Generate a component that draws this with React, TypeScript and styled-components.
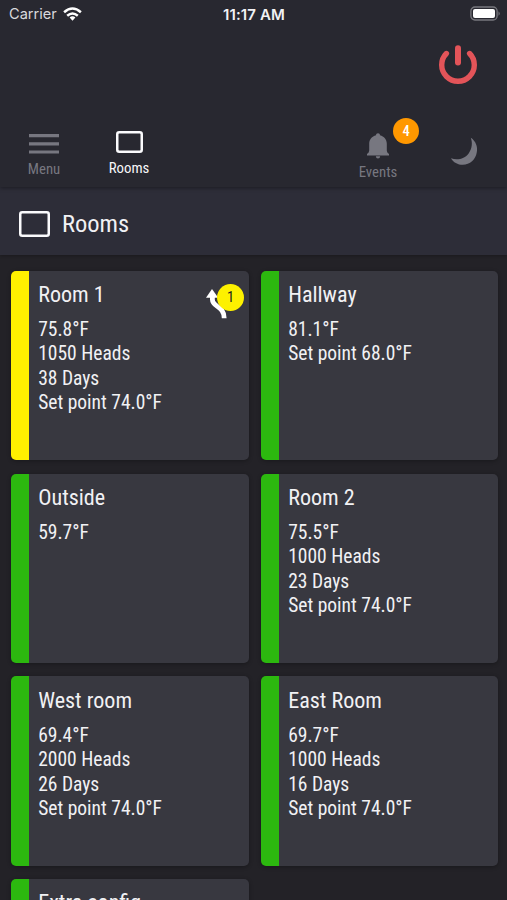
import React from "react";
import styled, { createGlobalStyle } from "styled-components";

const GlobalStyle = createGlobalStyle`
  * { box-sizing: border-box; }
  body {
    margin: 0;
    background: #232227;
    font-family: "Roboto Condensed", Roboto, sans-serif;
    font-stretch: 75%;
    overflow: hidden;
  }
`;

const Screen = styled.div`
  width: 507px;
  height: 900px;
  overflow: hidden;
  display: flex;
  flex-direction: column;
  color: #f1f1f4;
  background: #232227;
`;

const Header = styled.header`
  height: 187px;
  flex: none;
  display: flex;
  flex-direction: column;
  background: #282830;
  box-shadow: 0 1px 4px rgba(0, 0, 0, 0.4);
  z-index: 1;
`;

const StatusBar = styled.div`
  height: 28px;
  display: grid;
  grid-template-columns: 1fr auto 1fr;
  align-items: center;
  padding: 0 6px 0 9px;
  font-family: Inter, sans-serif;
  font-stretch: 100%;
  font-size: 14.6px;
`;

const Carrier = styled.div`
  display: flex;
  align-items: center;
  gap: 6px;
  color: #d9d9dd;
`;

const Clock = styled.div`
  font-size: 15px;
  font-weight: 600;
  letter-spacing: 0.15px;
  margin-right: 2px;
`;

const Battery = styled.div`
  display: flex;
  justify-content: flex-end;
  padding-bottom: 2px;
`;

const PowerRow = styled.div`
  height: 72px;
  display: flex;
  justify-content: flex-end;
  padding: 15px 28px 0 0;
`;

const Nav = styled.nav`
  flex: 1;
  display: flex;
  align-items: flex-start;
`;

const NavItem = styled.div<{ $width: number; $top: number; $active?: boolean; $left?: number }>`
  width: ${(p) => p.$width}px;
  margin-left: ${(p) => p.$left ?? 0}px;
  padding-top: ${(p) => p.$top}px;
  display: flex;
  flex-direction: column;
  align-items: center;
  color: ${(p) => (p.$active ? "#f7f7f9" : "#777780")};
  svg { display: block; }
`;

const NavLabel = styled.span<{ $gap: number }>`
  margin-top: ${(p) => p.$gap}px;
  font-size: 14.8px;
  line-height: 18px;
`;

const BadgeAnchor = styled.div`
  position: relative;
`;

const Badge = styled.span<{ $kind: "alert" | "warning" }>`
  position: absolute;
  left: ${(p) => (p.$kind === "alert" ? 27 : 11.5)}px;
  top: ${(p) => (p.$kind === "alert" ? -15 : -5)}px;
  width: ${(p) => (p.$kind === "alert" ? 26 : 27)}px;
  height: ${(p) => (p.$kind === "alert" ? 26 : 27)}px;
  border-radius: 50%;
  display: flex;
  align-items: center;
  justify-content: center;
  font-size: 14.5px;
  font-weight: ${(p) => (p.$kind === "alert" ? 500 : 400)};
  color: ${(p) => (p.$kind === "alert" ? "#fff" : "#222")};
  background: ${(p) => (p.$kind === "alert" ? "#ff9800" : "#fdf100")};
`;

const PageTitle = styled.div`
  height: 68px;
  flex: none;
  display: flex;
  align-items: center;
  gap: 12px;
  padding: 6px 19px 0;
  background: #2d2d38;
  box-shadow: 0 1px 3px rgba(0, 0, 0, 0.25);
  h1 {
    margin: 0;
    font-size: 24.5px;
    line-height: 30px;
    font-weight: 400;
  }
`;

const Grid = styled.main`
  display: grid;
  grid-template-columns: 238px 237.6px;
  grid-auto-rows: 189.3px;
  gap: 13.5px 12px;
  padding: 15.9px 8px 0 10.7px;
`;

const Card = styled.article<{ $color: string }>`
  display: flex;
  justify-content: space-between;
  overflow: hidden;
  border-radius: 5px;
  border-left: 18px solid ${(p) => p.$color};
  background: #383840;
  box-shadow: 0 1px 4px rgba(0, 0, 0, 0.3);
`;

const CardBody = styled.div`
  padding: 9.1px 0 0 9.5px;
  white-space: nowrap;
  h2 {
    margin: 0 0 10px;
    font-size: 22.1px;
    line-height: 28px;
    font-weight: 400;
  }
`;

const Reading = styled.div`
  font-size: 19.5px;
  line-height: 24.5px;
`;

const CardStatus = styled.div`
  width: 43px;
  padding-top: 18px;
  svg { display: block; }
`;

const WifiIcon = () => (
  <svg width="19" height="15" viewBox="0 0 19 15" fill="none" stroke="#fff" strokeWidth="2.5">
    <path d="M1.1 5.2Q9.5-2.2 17.9 5.2" />
    <path d="M4.2 8.8Q9.5 4.1 14.8 8.8" />
    <path d="M6.6 10.6Q9.5 8.1 12.4 10.6L9.5 13.8Z" fill="#fff" stroke="none" />
  </svg>
);

const BatteryIcon = () => (
  <svg width="31" height="15" viewBox="0 0 31 15">
    <rect x="0.9" y="1" width="26.2" height="13" rx="4" fill="none" stroke="#77777d" strokeWidth="1.3" />
    <rect x="3" y="3" width="22" height="9" rx="2" fill="#fff" />
    <path d="M28.5 5.2Q31 7.5 28.5 9.8Z" fill="#77777d" />
  </svg>
);

const PowerIcon = () => (
  <svg width="42" height="44" viewBox="0 0 42 44" fill="none" stroke="#e35459" strokeLinecap="round">
    <path d="M9.4 10.5A16.3 16.3 0 1 0 32.6 10.5" strokeWidth="5.4" />
    <path d="M21 5.2V19.6" strokeWidth="6" />
  </svg>
);

const MenuIcon = () => (
  <svg width="30" height="20" viewBox="0 0 30 20" fill="currentColor">
    <path d="M0 0H30V3.2H0zM0 8.2H30V11.4H0zM0 16.4H30V19.6H0z" />
  </svg>
);

const RoomIcon = ({ width, height }: { width: number; height: number }) => (
  <svg width={width} height={height} fill="none" stroke="#fafafc" strokeWidth="2.5">
    <rect x="1.25" y="1.25" width={width - 2.5} height={height - 2.5} rx="2" />
  </svg>
);

const BellIcon = () => (
  <svg width="24" height="27" viewBox="0 0 24 27" fill="currentColor">
    <path d="M12 .2C13.2.2 14 1 14 2.3C18 3.3 20.8 6.7 20.8 10.7V17.5Q20.8 19.6 23 21V22.6H1V21Q3.2 19.6 3.2 17.5V10.7C3.2 6.7 6 3.3 10 2.3C10 1 10.8.2 12 .2ZM9.8 23.3H14.2Q14 25.6 12 25.6T9.8 23.3Z" />
  </svg>
);

const MoonIcon = () => (
  <svg width="28" height="28" viewBox="0 0 28 28" fill="currentColor">
    <path d="M20.8.8C25.8 4.2 27.8 9.6 26.8 15.3C25.6 22.6 20 27.8 12.8 27.8C7.8 27.8 3.2 25.4 1 21.2C7.4 23.8 14.6 21.8 18.8 16.2C22.2 11.6 22.6 5.8 20.8.8Z" />
  </svg>
);

const TrendIcon = () => (
  <svg width="23" height="30" viewBox="0 0 23 30" fill="none">
    <path d="M6.4 8V10.5C6.4 18.5 18.2 16.5 18.2 29.3" stroke="#fff" strokeWidth="4.8" />
    <path d="M6 0L12.2 8.7H0Z" fill="#fff" />
  </svg>
);

type Room = { name: string; readings: string[]; alerts?: number };

const rooms: Room[] = [
  { name: "Room 1", readings: ["75.8°F", "1050 Heads", "38 Days", "Set point 74.0°F"], alerts: 1 },
  { name: "Hallway", readings: ["81.1°F", "Set point 68.0°F"] },
  { name: "Outside", readings: ["59.7°F"] },
  { name: "Room 2", readings: ["75.5°F", "1000 Heads", "23 Days", "Set point 74.0°F"] },
  { name: "West room", readings: ["69.4°F", "2000 Heads", "26 Days", "Set point 74.0°F"] },
  { name: "East Room", readings: ["69.7°F", "1000 Heads", "16 Days", "Set point 74.0°F"] },
  { name: "Extra config", readings: [] },
];

export default function App() {
  return (
    <Screen>
      <GlobalStyle />
      <Header>
        <StatusBar>
          <Carrier>Carrier <WifiIcon /></Carrier>
          <Clock>11:17 AM</Clock>
          <Battery><BatteryIcon /></Battery>
        </StatusBar>
        <PowerRow><PowerIcon /></PowerRow>
        <Nav>
          <NavItem $width={60} $left={14} $top={34}>
            <MenuIcon />
            <NavLabel $gap={6}>Menu</NavLabel>
          </NavItem>
          <NavItem $width={60} $left={25} $top={31} $active>
            <RoomIcon width={27} height={22} />
            <NavLabel $gap={6}>Rooms</NavLabel>
          </NavItem>
          <NavItem $width={60} $left={189} $top={33}>
            <BadgeAnchor>
              <BellIcon />
              <Badge $kind="alert">4</Badge>
            </BadgeAnchor>
            <NavLabel $gap={3}>Events</NavLabel>
          </NavItem>
          <NavItem $width={60} $left={26} $top={37}>
            <MoonIcon />
          </NavItem>
        </Nav>
      </Header>
      <PageTitle>
        <RoomIcon width={31} height={26} />
        <h1>Rooms</h1>
      </PageTitle>
      <Grid>
        {rooms.map((room) => (
          <Card key={room.name} $color={room.alerts ? "#fff000" : "#2cb80f"}>
            <CardBody>
              <h2>{room.name}</h2>
              {room.readings.map((r) => <Reading key={r}>{r}</Reading>)}
            </CardBody>
            {room.alerts && (
              <CardStatus>
                <BadgeAnchor>
                  <TrendIcon />
                  <Badge $kind="warning">{room.alerts}</Badge>
                </BadgeAnchor>
              </CardStatus>
            )}
          </Card>
        ))}
      </Grid>
    </Screen>
  );
}
